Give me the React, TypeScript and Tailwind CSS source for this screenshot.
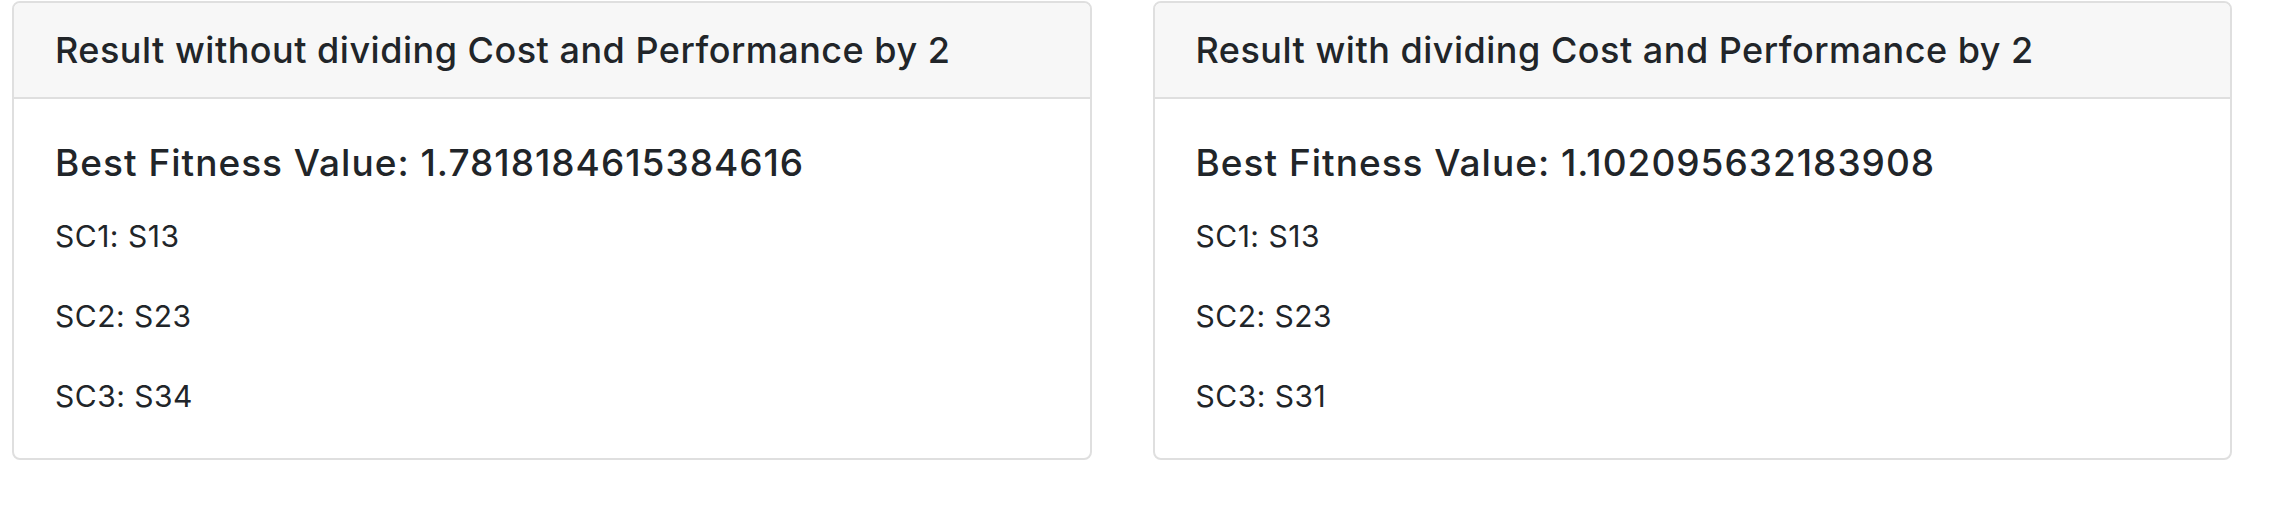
import React from "react";

type Result = {
  title: string;
  fitness: string;
  picks: string[];
};

const results: Result[] = [
  {
    title: "Result without dividing Cost and Performance by 2",
    fitness: "1.7818184615384616",
    picks: ["SC1: S13", "SC2: S23", "SC3: S34"],
  },
  {
    title: "Result with dividing Cost and Performance by 2",
    fitness: "1.102095632183908",
    picks: ["SC1: S13", "SC2: S23", "SC3: S31"],
  },
];

function ResultCard({ title, fitness, picks }: Result) {
  return (
    <div className="flex-1 overflow-hidden rounded-[8px] border-2 border-[#dfdfdf] bg-white">
      <div className="flex h-[96px] items-center border-b-2 border-[#dfdfdf] bg-[#f7f7f7] px-[41px]">
        <h4 className="text-[36px] font-medium leading-[42px] tracking-[0.5px]">{title}</h4>
      </div>
      <div className="px-[41px] pt-[42px] pb-[39px]">
        <h5 className="mb-[30px] text-[37px] font-medium leading-[43px] tracking-[1px]">
          Best Fitness Value: {fitness}
        </h5>
        <div className="flex flex-col gap-[35px]">
          {picks.map((p) => (
            <p key={p} className="text-[30px] leading-[45px] tracking-[0.5px]">
              {p}
            </p>
          ))}
        </div>
      </div>
    </div>
  );
}

export default function App() {
  return (
    <div
      className="flex h-[528px] w-full items-start gap-[61px] bg-white pt-[1px] pr-[42px] pl-[12px] text-[#212529]"
      style={{ fontFamily: "Inter, 'Liberation Sans', sans-serif" }}
    >
      {results.map((r) => (
        <ResultCard key={r.title} {...r} />
      ))}
    </div>
  );
}
